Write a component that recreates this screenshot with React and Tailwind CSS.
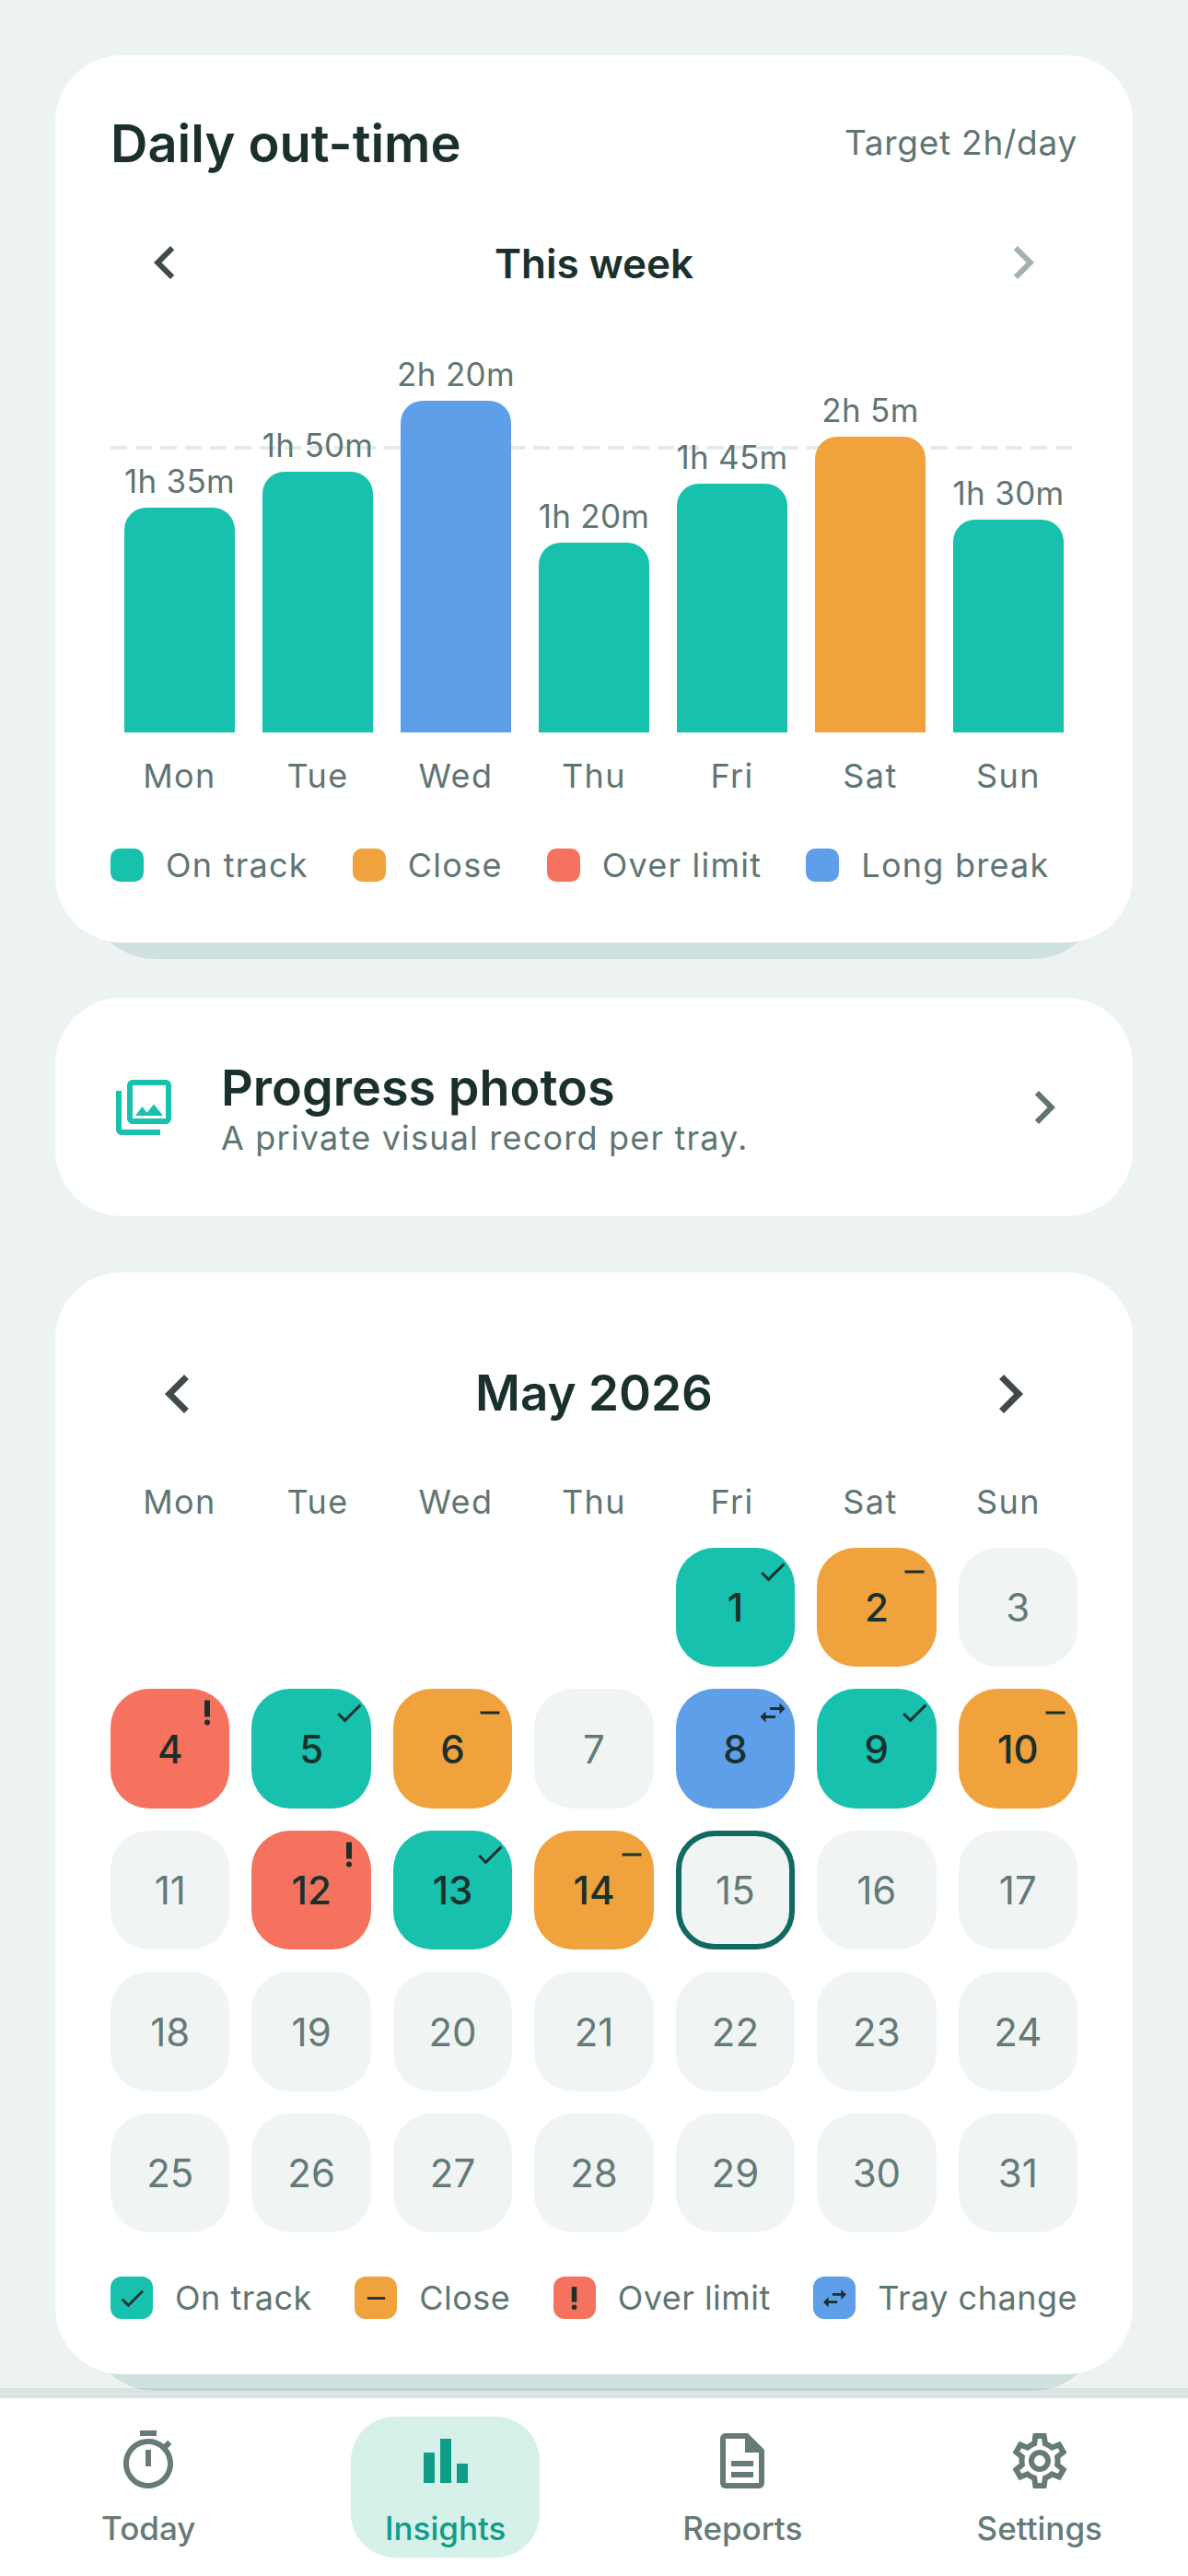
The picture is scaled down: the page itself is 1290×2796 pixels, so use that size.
import {
  MdBarChart,
  MdCheck,
  MdChevronLeft,
  MdChevronRight,
  MdOutlineDescription,
  MdOutlinePhotoLibrary,
  MdOutlineSettings,
  MdOutlineTimer,
  MdPriorityHigh,
  MdRemove,
  MdSwapHoriz,
} from 'react-icons/md';

const DAYS = ['Mon', 'Tue', 'Wed', 'Thu', 'Fri', 'Sat', 'Sun'];

const BARS = [
  { label: '1h 35m', mins: 95, color: 'bg-[#17c1ae]' },
  { label: '1h 50m', mins: 110, color: 'bg-[#17c1ae]' },
  { label: '2h 20m', mins: 140, color: 'bg-[#5f9ee8]' },
  { label: '1h 20m', mins: 80, color: 'bg-[#17c1ae]' },
  { label: '1h 45m', mins: 105, color: 'bg-[#17c1ae]' },
  { label: '2h 5m', mins: 125, color: 'bg-[#f0a23c]' },
  { label: '1h 30m', mins: 90, color: 'bg-[#17c1ae]' },
];

const STATUS = {
  ok: { bg: 'bg-[#17c1ae]', Icon: MdCheck },
  close: { bg: 'bg-[#f0a23c]', Icon: MdRemove },
  over: { bg: 'bg-[#f4725e]', Icon: MdPriorityHigh },
  tray: { bg: 'bg-[#5f9ee8]', Icon: MdSwapHoriz },
};

const MAY = {
  1: 'ok', 2: 'close', 4: 'over', 5: 'ok', 6: 'close', 8: 'tray', 9: 'ok',
  10: 'close', 12: 'over', 13: 'ok', 14: 'close',
};

const TABS = [
  { label: 'Today', Icon: MdOutlineTimer },
  { label: 'Insights', Icon: MdBarChart, active: true },
  { label: 'Reports', Icon: MdOutlineDescription },
  { label: 'Settings', Icon: MdOutlineSettings },
];

function Chart() {
  return (
    <div className="relative flex h-[474px] items-end">
      <div className="absolute left-0 right-[6px] top-[163px] h-[4px] bg-[repeating-linear-gradient(90deg,#e3ecea_0,#e3ecea_18px,transparent_18px,transparent_27px)]" />
      {BARS.map(bar => (
        <div key={bar.label} className="relative flex flex-1 flex-col items-center">
          <span className="mb-[7px] text-[35px] leading-[44px] tracking-[0.3px] text-[#5f7572]">{bar.label}</span>
          <div
            className={`w-[120px] rounded-t-[24px] ${bar.color}`}
            style={{ height: `${(bar.mins * 18) / 7}px` }}
          />
        </div>
      ))}
    </div>
  );
}

function WeekdayRow({ className }) {
  return (
    <div className={`flex h-[48px] items-center ${className}`}>
      {DAYS.map(day => (
        <span key={day} className="flex-1 text-center text-[36px] leading-[48px] tracking-[1.4px] text-[#5f7572]">
          {day}
        </span>
      ))}
    </div>
  );
}

function DayCell({ day }) {
  const status = STATUS[MAY[day]];
  if (status) {
    return (
      <div className={`relative flex aspect-square items-center justify-center rounded-[42px] text-[42px] font-medium text-[#1a302d] ${status.bg}`}>
        {day}
        <status.Icon className="absolute right-[6px] top-[8px] text-[36px]" />
      </div>
    );
  }
  const today = day === 15;
  return (
    <div className={`flex aspect-square items-center justify-center rounded-[42px] bg-[#f0f5f4] text-[42px] text-[#647a77] ${today ? 'border-[6px] border-[#12695f]' : ''}`}>
      {day}
    </div>
  );
}

export default function App() {
  const days = Array.from({ length: 31 }, (_, i) => i + 1);

  return (
    <div className="flex h-[2796px] flex-col overflow-hidden bg-[#edf3f2] font-['Inter',sans-serif]">
      <main className="isolate h-[2592px] shrink-0 px-[60px] pt-[60px]">
        <section className="relative rounded-[72px] bg-white px-[60px] pb-[66px] pt-[60px]">
          <div className="absolute bottom-[-18px] left-[36px] right-[36px] -z-10 h-[200px] rounded-[72px] bg-[#d0e2e0]" />
          <div className="flex h-[72px] items-center justify-between">
            <h1 className="text-[56px] font-semibold leading-[72px] text-[#1a302d]">Daily out-time</h1>
            <span className="mb-[2px] text-[37px] tracking-[0.74px] text-[#5f7572]">Target 2h/day</span>
          </div>
          <div className="mt-[57px] flex h-[72px] items-center justify-between px-[23px]">
            <MdChevronLeft className="text-[72px] text-[#404a49]" />
            <span className="mt-[2px] text-[44px] font-semibold text-[#1a302d]">This week</span>
            <MdChevronRight className="text-[72px] text-[#a3b1af]" />
          </div>
          <Chart />
          <WeekdayRow className="mt-[23px]" />
          <div className="mt-[55px] flex h-[36px] items-center gap-[48px]">
            {[
              ['On track', 'bg-[#17c1ae]'],
              ['Close', 'bg-[#f0a23c]'],
              ['Over limit', 'bg-[#f4725e]'],
              ['Long break', 'bg-[#5f9ee8]'],
            ].map(([label, color]) => (
              <div key={label} className="flex items-center gap-[24px]">
                <span className={`h-[36px] w-[36px] rounded-[10px] ${color}`} />
                <span className="text-[36px] tracking-[1.25px] text-[#5f7572]">{label}</span>
              </div>
            ))}
          </div>
        </section>

        <section className="mt-[60px] flex h-[237px] items-center rounded-[72px] bg-white px-[60px]">
          <MdOutlinePhotoLibrary className="text-[72px] text-[#17c1ae]" />
          <div className="ml-[48px] flex-1 pt-[3px]">
            <h2 className="text-[54px] font-semibold leading-[62px] text-[#1a302d]">Progress photos</h2>
            <p className="mt-[1px] text-[36px] leading-[44px] tracking-[1.2px] text-[#5f7572]">A private visual record per tray.</p>
          </div>
          <MdChevronRight className="text-[72px] text-[#5f7572]" />
        </section>

        <section className="relative mt-[61px] rounded-[72px] bg-white px-[60px] pb-[60px] pt-[90px]">
          <div className="absolute bottom-[-18px] left-[36px] right-[36px] -z-10 h-[200px] rounded-[72px] bg-[#d0e2e0]" />
          <div className="flex h-[84px] items-center justify-between px-[31px]">
            <MdChevronLeft className="text-[84px] text-[#404a49]" />
            <span className="text-[53px] font-semibold text-[#1a302d]">May 2026</span>
            <MdChevronRight className="text-[84px] text-[#404a49]" />
          </div>
          <WeekdayRow className="mt-[51px]" />
          <div className="mt-[26px] grid grid-cols-7 gap-[24px]">
            <div className="col-span-4" />
            {days.map(day => (
              <DayCell key={day} day={day} />
            ))}
          </div>
          <div className="mt-[48px] flex h-[46px] items-center justify-between">
            {[
              ['On track', 'ok'],
              ['Close', 'close'],
              ['Over limit', 'over'],
              ['Tray change', 'tray'],
            ].map(([label, key]) => {
              const { bg, Icon } = STATUS[key];
              return (
                <div key={label} className="flex items-center gap-[24px]">
                  <span className={`flex h-[46px] w-[46px] items-center justify-center rounded-[12px] text-[33px] text-[#1a302d] ${bg}`}>
                    <Icon />
                  </span>
                  <span className="text-[36px] tracking-[0.5px] text-[#5f7572]">{label}</span>
                </div>
              );
            })}
          </div>
        </section>
      </main>

      <nav className="relative z-10 flex-1">
        <div className="h-[11px] bg-[#1a302d]/8" />
        <div className="grid h-[193px] grid-cols-4 justify-items-center bg-white pt-[20px]">
          {TABS.map(({ label, Icon, active }) => (
            <div
              key={label}
              className={`flex h-[153px] w-[205px] flex-col items-center rounded-[48px] pt-[12px] ${active ? 'bg-[#d6f0ea] text-[#0f9d8a]' : 'text-[#667a77]'}`}
            >
              <Icon className="text-[72px]" />
              <span className="mt-[15px] text-[35px] font-medium leading-[44px]">{label}</span>
            </div>
          ))}
        </div>
      </nav>
    </div>
  );
}
